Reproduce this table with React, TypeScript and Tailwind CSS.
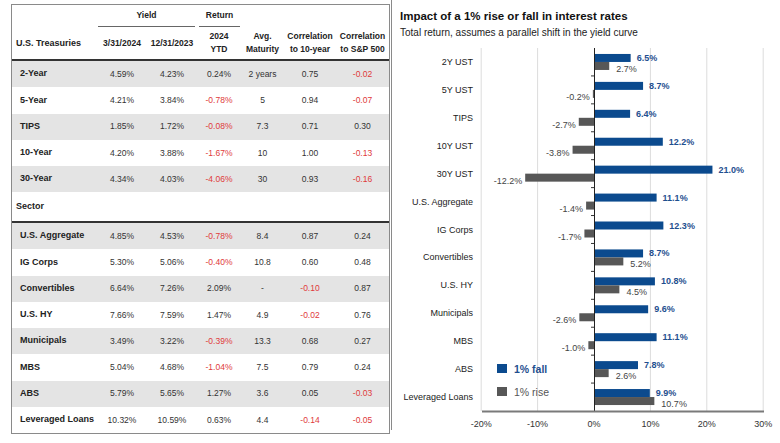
import React from "react";

const COLS = "grid grid-cols-[85px_50px_50px_44px_43px_52px_53px]";

type Row = [string, string, string, string, string, string, string];

const treasuries: Row[] = [
  ["2-Year", "4.59%", "4.23%", "0.24%", "2 years", "0.75", "-0.02"],
  ["5-Year", "4.21%", "3.84%", "-0.78%", "5", "0.94", "-0.07"],
  ["TIPS", "1.85%", "1.72%", "-0.08%", "7.3", "0.71", "0.30"],
  ["10-Year", "4.20%", "3.88%", "-1.67%", "10", "1.00", "-0.13"],
  ["30-Year", "4.34%", "4.03%", "-4.06%", "30", "0.93", "-0.16"],
];

const sectors: Row[] = [
  ["U.S. Aggregate", "4.85%", "4.53%", "-0.78%", "8.4", "0.87", "0.24"],
  ["IG Corps", "5.30%", "5.06%", "-0.40%", "10.8", "0.60", "0.48"],
  ["Convertibles", "6.64%", "7.26%", "2.09%", "-", "-0.10", "0.87"],
  ["U.S. HY", "7.66%", "7.59%", "1.47%", "4.9", "-0.02", "0.76"],
  ["Municipals", "3.49%", "3.22%", "-0.39%", "13.3", "0.68", "0.27"],
  ["MBS", "5.04%", "4.68%", "-1.04%", "7.5", "0.79", "0.24"],
  ["ABS", "5.79%", "5.65%", "1.27%", "3.6", "0.05", "-0.03"],
  ["Leveraged Loans", "10.32%", "10.59%", "0.63%", "4.4", "-0.14", "-0.05"],
];

const bars: [string, number, number][] = [
  ["2Y UST", 6.5, 2.7],
  ["5Y UST", 8.7, -0.2],
  ["TIPS", 6.4, -2.7],
  ["10Y UST", 12.2, -3.8],
  ["30Y UST", 21.0, -12.2],
  ["U.S. Aggregate", 11.1, -1.4],
  ["IG Corps", 12.3, -1.7],
  ["Convertibles", 8.7, 5.2],
  ["U.S. HY", 10.8, 4.5],
  ["Municipals", 9.6, -2.6],
  ["MBS", 11.1, -1.0],
  ["ABS", 7.8, 2.6],
  ["Leveraged Loans", 9.9, 10.7],
];

function DataRow({ row, shade }: { row: Row; shade: boolean }) {
  return (
    <div className={`${COLS} h-[26.25px] items-center text-[8.5px] ${shade ? "bg-[#e4e4e4]" : "bg-white"}`}>
      <div className="pl-[8px] text-[9px] font-bold text-[#222] whitespace-nowrap">{row[0]}</div>
      {row.slice(1).map((v, i) => (
        <div key={i} className={`text-center ${v.startsWith("-") && v !== "-" ? "text-[#e03a3a]" : "text-[#333]"}`}>
          {v}
        </div>
      ))}
    </div>
  );
}

function YieldTable() {
  return (
    <div className="ml-[11px] mt-[4px] w-[379px] h-[430px] border border-[#8a8a8a] flex flex-col text-[#222]">
      <div className={`${COLS} h-[22px] text-[8.5px] font-bold`}>
        <div />
        <div className="col-span-2 ml-[1px] mr-[2px] border-b border-[#666] flex items-center justify-center">Yield</div>
        <div className="ml-[2px] mr-[1px] border-b border-[#666] flex items-center justify-center">Return</div>
        <div className="col-span-3" />
      </div>
      <div className={`${COLS} h-[32px] items-center text-[8.5px] font-bold leading-[13px]`}>
        <div className="pl-[4px] text-[9px]">U.S. Treasuries</div>
        <div className="text-center">3/31/2024</div>
        <div className="text-center">12/31/2023</div>
        <div className="text-center">2024<br />YTD</div>
        <div className="text-center">Avg.<br />Maturity</div>
        <div className="text-center whitespace-nowrap">Correlation<br />to 10-year</div>
        <div className="text-center whitespace-nowrap">Correlation<br />to S&amp;P 500</div>
      </div>
      <div className="h-[2px] bg-[#333]" />
      {treasuries.map((r, i) => (
        <DataRow key={r[0]} row={r} shade={i % 2 === 0} />
      ))}
      <div className="h-[28.75px] flex items-center pl-[4px] text-[9px] font-bold">Sector</div>
      <div className="h-[2px] bg-[#333]" />
      {sectors.map((r, i) => (
        <DataRow key={r[0]} row={r} shade={i % 2 === 0} />
      ))}
    </div>
  );
}

function Chart() {
  const zero = 594;
  const s = 5.64;
  const top = 48;
  const bottom = 411;
  const step = (bottom - top) / bars.length;
  const grid = [-20, -10, 10, 20, 30];
  const ticks = [-20, -10, 0, 10, 20, 30];
  return (
    <svg width={388} height={391} className="block">
      <g transform="translate(-392,-39)" fontFamily="'Liberation Sans', Arial, sans-serif" fontSize={9}>
        {grid.map((g) => (
          <line key={g} x1={zero + g * s} x2={zero + g * s} y1={top} y2={bottom} stroke="#dcdcdc" strokeWidth={1} />
        ))}
        {bars.map(([name, fall, rise], k) => {
          const c = top + step * (k + 0.5);
          const fx = zero + fall * s;
          const rx = zero + rise * s;
          return (
            <g key={name}>
              <text x={473} y={c + 3} textAnchor="end" fill="#222">{name}</text>
              <rect x={zero} y={c - 8} width={fall * s} height={8} fill="#0b4a8e" />
              <text x={fx + 6} y={c - 1} fill="#1f4f8f" fontWeight="bold">{fall.toFixed(1)}%</text>
              {rise >= 0 ? (
                <>
                  <rect x={zero} y={c} width={rise * s} height={8} fill="#575757" />
                  <text x={rx + 7} y={c + 10} fill="#444">{rise.toFixed(1)}%</text>
                </>
              ) : (
                <>
                  <rect x={rx} y={c} width={-rise * s} height={8} fill="#575757" />
                  <text x={rx - 3} y={c + 10} textAnchor="end" fill="#444">{rise.toFixed(1)}%</text>
                </>
              )}
            </g>
          );
        })}
        {bars.slice(1).map((_, k) => (
          <line key={k} x1={zero - 3} x2={zero} y1={top + step * (k + 1)} y2={top + step * (k + 1)} stroke="#333" strokeWidth={1} />
        ))}
        <line x1={zero + 0.5} x2={zero + 0.5} y1={top} y2={bottom} stroke="#222" strokeWidth={1} />
        <line x1={482} x2={764} y1={bottom + 0.5} y2={bottom + 0.5} stroke="#7a7a7a" strokeWidth={2} />
        {ticks.map((t) => (
          <text key={t} x={zero + t * s} y={427} textAnchor="middle" fill="#333">{t}%</text>
        ))}
        <rect x={497} y={364} width={10} height={9} fill="#0b4a8e" />
        <text x={514} y={372.5} fill="#1f4f8f" fontWeight="bold" fontSize={10.5}>1% fall</text>
        <rect x={497} y={387} width={10} height={9} fill="#575757" />
        <text x={514} y={395.5} fill="#555" fontSize={10.5}>1% rise</text>
      </g>
    </svg>
  );
}

export default function App() {
  return (
    <div className="w-[780px] h-[443px] bg-white flex overflow-hidden font-['Liberation_Sans',Arial,sans-serif]">
      <YieldTable />
      <div className="ml-[1px] h-[430px] border-l border-[#8a8a8a] flex-1 flex flex-col">
        <div className="pl-[8px] pt-[9px] text-[11.5px] leading-[14px] font-bold text-[#111] whitespace-nowrap">
          Impact of a 1% rise or fall in interest rates
        </div>
        <div className="pl-[8px] mt-[4px] text-[10px] leading-[12px] text-[#222] whitespace-nowrap">
          Total return, assumes a parallel shift in the yield curve
        </div>
        <Chart />
      </div>
    </div>
  );
}
